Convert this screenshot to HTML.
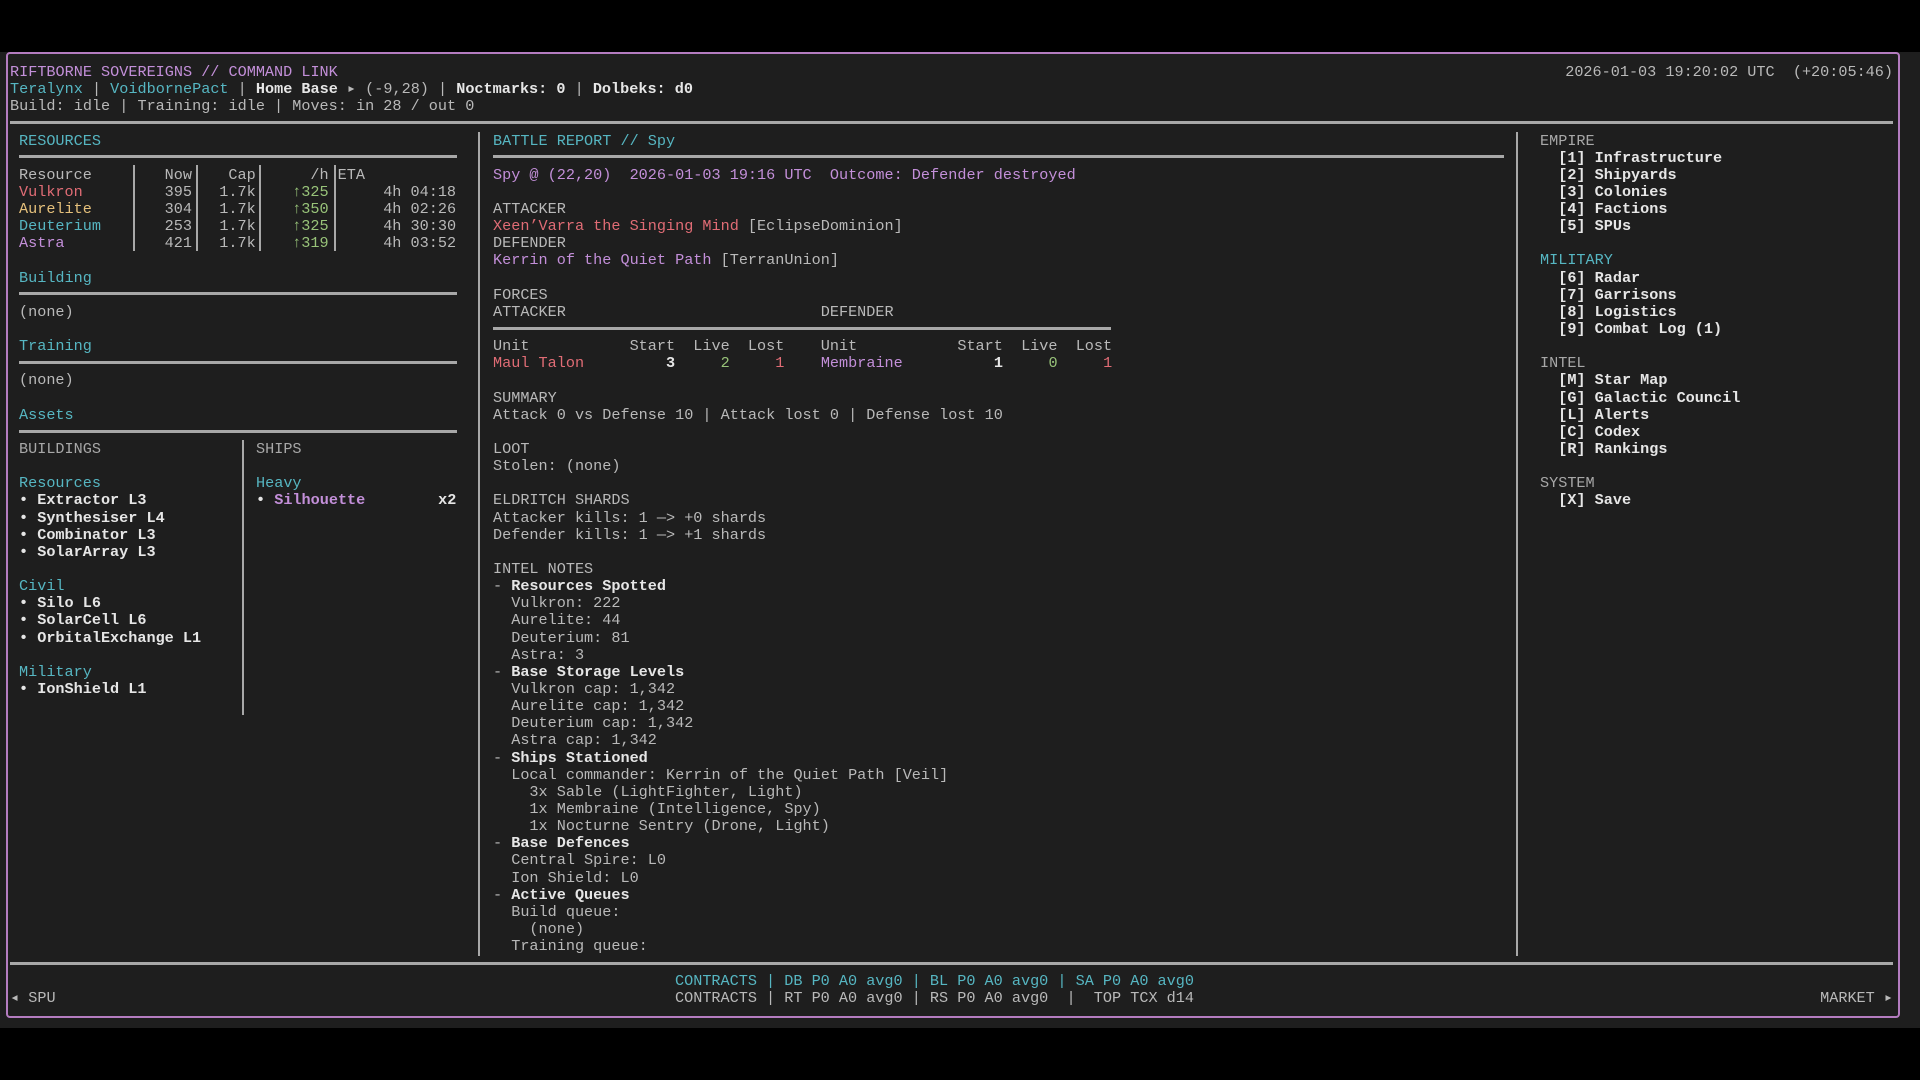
<!DOCTYPE html>
<html><head><meta charset="utf-8"><style>
html,body{margin:0;padding:0;background:#000;width:1920px;height:1080px;overflow:hidden}
.win{position:absolute;left:0;top:52px;width:1920px;height:976px;background:#1e1e1e}
.frame{position:absolute;left:6px;top:52px;width:1890px;height:962px;border:2px solid #b47cc0;border-radius:4px}
pre{position:absolute;margin:0;font-family:"Liberation Mono","DejaVu Sans Mono",monospace;font-size:15.18px;line-height:17.14px;color:#b9b9b9;white-space:pre}
.c{color:#56b6c2}.p{color:#c38fd9}.r{color:#e06c75}.y{color:#e5c07b}.g{color:#98c379}.w{color:#e6e6e6;font-weight:bold}.d{color:#a8a8a8}
.h{position:absolute;height:3px;background:#a8a8a8}
.v{position:absolute;width:2px;background:#a8a8a8}
</style></head><body>
<div class="win"></div>
<div class="frame"></div>
<pre style="left:10px;top:64px"><span class="p">RIFTBORNE SOVEREIGNS // COMMAND LINK</span>
<span class="c">Teralynx</span> | <span class="c">VoidbornePact</span> | <span class="w">Home Base</span> ▸ (-9,28) | <span class="w">Noctmarks: 0</span> | <span class="w">Dolbeks: d0</span>
Build: idle | Training: idle | Moves: in 28 / out 0</pre>
<pre style="right:27px;top:64px">2026-01-03 19:20:02 UTC  (+20:05:46)</pre>
<div class="h" style="left:10px;width:1883px;top:121px"></div>

<pre style="left:19px;top:132.5px"><span class="c">RESOURCES</span>

Resource        Now    Cap      /h ETA
<span class="r">Vulkron</span>         395   1.7k    <span class="g">↑325</span>      4h 04:18
<span class="y">Aurelite</span>        304   1.7k    <span class="g">↑350</span>      4h 02:26
<span class="c">Deuterium</span>       253   1.7k    <span class="g">↑325</span>      4h 30:30
<span class="p">Astra</span>           421   1.7k    <span class="g">↑319</span>      4h 03:52

<span class="c">Building</span>

(none)

<span class="c">Training</span>

(none)

<span class="c">Assets</span>

<span class="d">BUILDINGS</span>

<span class="c">Resources</span>
<span class="w">• Extractor L3</span>
<span class="w">• Synthesiser L4</span>
<span class="w">• Combinator L3</span>
<span class="w">• SolarArray L3</span>

<span class="c">Civil</span>
<span class="w">• Silo L6</span>
<span class="w">• SolarCell L6</span>
<span class="w">• OrbitalExchange L1</span>

<span class="c">Military</span>
<span class="w">• IonShield L1</span></pre>
<pre style="left:256px;top:441px"><span class="d">SHIPS</span>

<span class="c">Heavy</span>
<span class="w">• <span class="p">Silhouette</span>        x2</span></pre>
<div class="h" style="left:19px;width:438px;top:155px"></div>
<div class="h" style="left:19px;width:438px;top:292px"></div>
<div class="h" style="left:19px;width:438px;top:361px"></div>
<div class="h" style="left:19px;width:438px;top:430px"></div>
<div class="v" style="left:133px;top:165px;height:86px"></div>
<div class="v" style="left:196px;top:165px;height:86px"></div>
<div class="v" style="left:259px;top:165px;height:86px"></div>
<div class="v" style="left:334px;top:165px;height:86px"></div>
<div class="v" style="left:242px;top:440px;height:275px"></div>

<div class="v" style="left:478px;top:132px;height:824px"></div>
<pre style="left:493px;top:132.5px"><span class="c">BATTLE REPORT // Spy</span>

<span class="p">Spy @ (22,20)  2026-01-03 19:16 UTC  Outcome: Defender destroyed</span>

ATTACKER
<span class="r">Xeen’Varra the Singing Mind</span> [EclipseDominion]
DEFENDER
<span class="p">Kerrin of the Quiet Path</span> [TerranUnion]

FORCES
ATTACKER                            DEFENDER

Unit           Start  Live  Lost    Unit           Start  Live  Lost
<span class="r">Maul Talon</span>         <span class="w">3</span>     <span class="g">2</span>     <span class="r">1</span>    <span class="p">Membraine</span>          <span class="w">1</span>     <span class="g">0</span>     <span class="r">1</span>

SUMMARY
Attack 0 vs Defense 10 | Attack lost 0 | Defense lost 10

LOOT
Stolen: (none)

ELDRITCH SHARDS
Attacker kills: 1 —> +0 shards
Defender kills: 1 —> +1 shards

INTEL NOTES
- <span class="w">Resources Spotted</span>
  Vulkron: 222
  Aurelite: 44
  Deuterium: 81
  Astra: 3
- <span class="w">Base Storage Levels</span>
  Vulkron cap: 1,342
  Aurelite cap: 1,342
  Deuterium cap: 1,342
  Astra cap: 1,342
- <span class="w">Ships Stationed</span>
  Local commander: Kerrin of the Quiet Path [Veil]
    3x Sable (LightFighter, Light)
    1x Membraine (Intelligence, Spy)
    1x Nocturne Sentry (Drone, Light)
- <span class="w">Base Defences</span>
  Central Spire: L0
  Ion Shield: L0
- <span class="w">Active Queues</span>
  Build queue:
    (none)
  Training queue:</pre>
<div class="h" style="left:493px;width:1011px;top:155px"></div>
<div class="h" style="left:493px;width:618px;top:327px"></div>

<div class="v" style="left:1516px;top:132px;height:824px"></div>
<pre style="left:1540px;top:132.5px"><span class="d">EMPIRE</span>
<span class="w">  [1] Infrastructure
  [2] Shipyards
  [3] Colonies
  [4] Factions
  [5] SPUs</span>

<span class="c">MILITARY</span>
<span class="w">  [6] Radar
  [7] Garrisons
  [8] Logistics
  [9] Combat Log (1)</span>

<span class="d">INTEL</span>
<span class="w">  [M] Star Map
  [G] Galactic Council
  [L] Alerts
  [C] Codex
  [R] Rankings</span>

<span class="d">SYSTEM</span>
<span class="w">  [X] Save</span></pre>

<div class="h" style="left:10px;width:1883px;top:962px"></div>
<pre style="left:675px;top:973px"><span class="c">CONTRACTS | DB P0 A0 avg0 | BL P0 A0 avg0 | SA P0 A0 avg0</span>
CONTRACTS | RT P0 A0 avg0 | RS P0 A0 avg0  |  TOP TCX d14</pre>
<pre style="left:10px;top:990px">◂ SPU</pre>
<pre style="right:27px;top:990px">MARKET ▸</pre>
</body></html>
